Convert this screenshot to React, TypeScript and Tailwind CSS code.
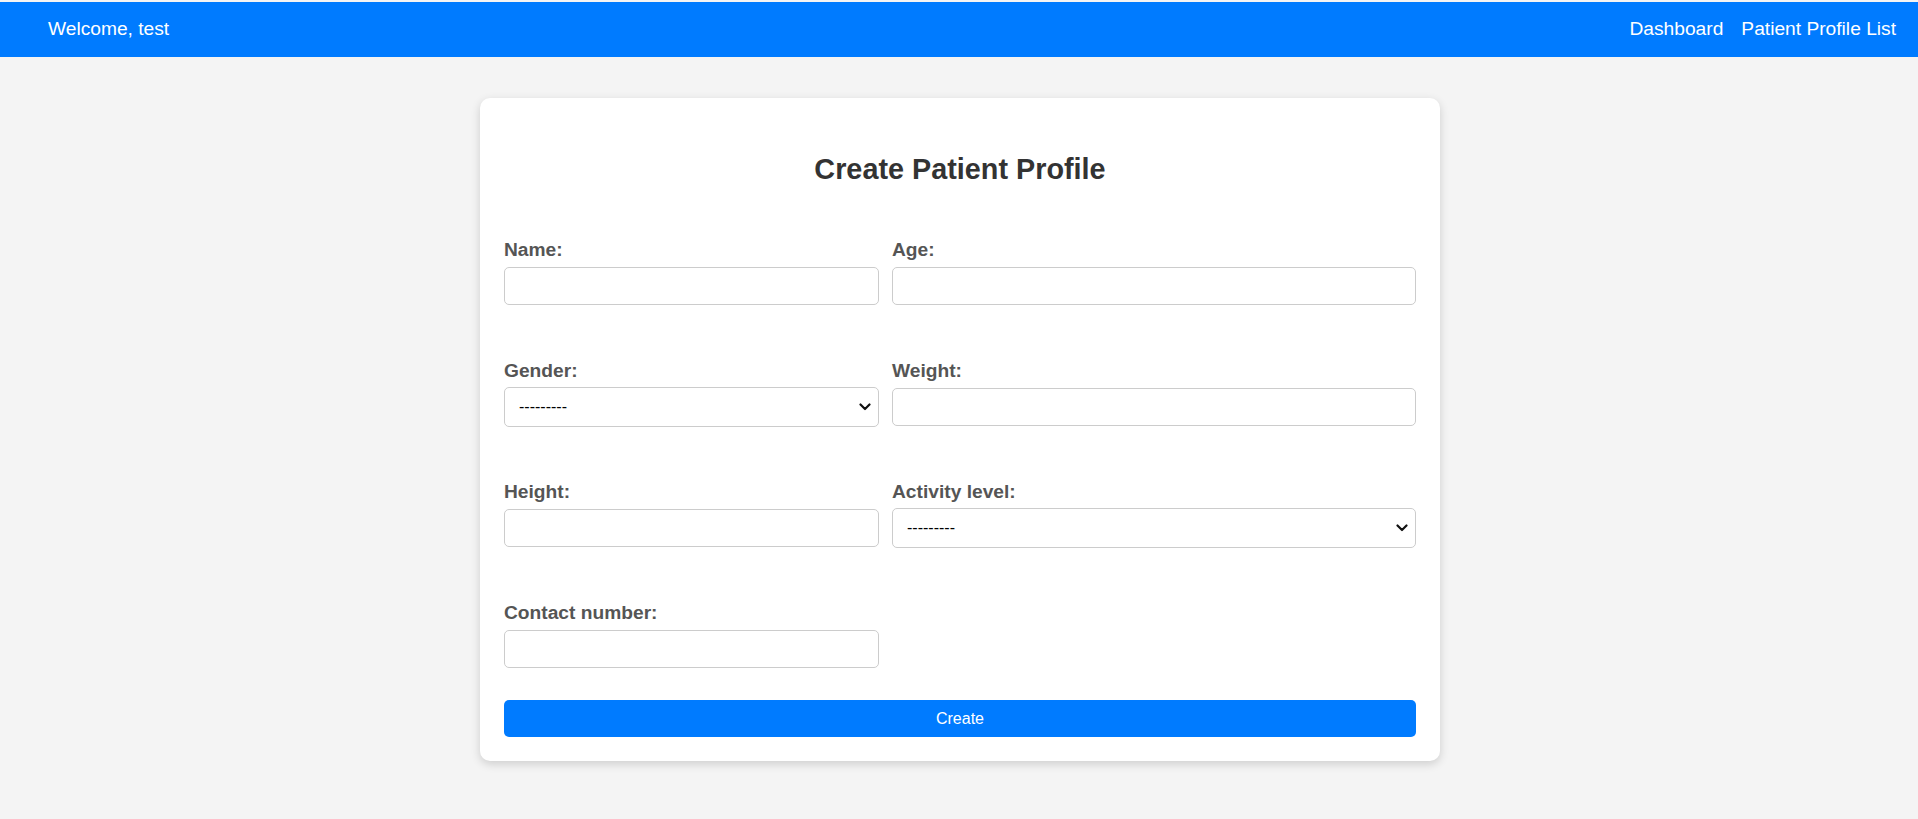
import React from 'react';

const Chevron: React.FC = () => (
  <svg
    className="pointer-events-none absolute right-[8px] top-1/2 -translate-y-1/2"
    width="12"
    height="8"
    viewBox="0 0 12 8"
    fill="none"
  >
    <path d="M1.5 1.5 L6 6 L10.5 1.5" stroke="#111" strokeWidth="2.2" strokeLinecap="round" strokeLinejoin="round" />
  </svg>
);

const TextField: React.FC<{ label: string; id: string }> = ({ label, id }) => (
  <div className="flex h-[67px] flex-col">
    <label htmlFor={id} className="mb-[5px] block text-[19.2px] font-bold leading-[22px] text-[#555]">
      {label}
    </label>
    <input
      id={id}
      type="text"
      className="mt-px h-[38px] w-full rounded-[5px] border border-[#ccc] bg-white px-[10px] text-[16px] outline-none"
    />
  </div>
);

const SelectField: React.FC<{ label: string; id: string; options: string[] }> = ({ label, id, options }) => (
  <div className="flex h-[67px] flex-col">
    <label htmlFor={id} className="mb-[5px] block text-[19.2px] font-bold leading-[22px] text-[#555]">
      {label}
    </label>
    <div className="relative">
      <select
        id={id}
        defaultValue=""
        className="h-[40px] w-full appearance-none rounded-[5px] border border-[#ccc] bg-white pl-[14px] pr-[30px] text-[16px] text-black outline-none"
      >
        <option value="">---------</option>
        {options.map((o) => (
          <option key={o} value={o}>{o}</option>
        ))}
      </select>
      <Chevron />
    </div>
  </div>
);

const App: React.FC = () => {
  return (
    <div className="min-h-screen bg-[#f4f4f4] pt-[2px] font-['Liberation_Sans',Arial,sans-serif]">
      <nav className="flex h-[55px] items-center justify-between bg-[#007bff] pb-[2px] pl-[48px] pr-[22px] text-[19.2px] leading-[22px] text-white">
        <span>Welcome, test</span>
        <div className="flex items-center gap-[18px]">
          <a href="#">Dashboard</a>
          <a href="#">Patient Profile List</a>
        </div>
      </nav>

      <div className="mt-[41px] flex justify-center pl-[2px]">
        <div className="w-[960px] rounded-[10px] bg-white px-[24px] pb-[24px] pt-[24px] shadow-[0_3px_10px_rgba(0,0,0,0.16)]">
          <h2 className="mt-[31px] text-center text-[28.8px] font-bold leading-[32px] text-[#333]">
            Create Patient Profile
          </h2>

          <form className="mt-[54px]" onSubmit={(e) => e.preventDefault()}>
            <div className="grid grid-cols-[375px_1fr] gap-x-[13px] gap-y-[54px]">
              <TextField label="Name:" id="name" />
              <TextField label="Age:" id="age" />
              <SelectField label="Gender:" id="gender" options={['Male', 'Female', 'Other']} />
              <TextField label="Weight:" id="weight" />
              <TextField label="Height:" id="height" />
              <SelectField
                label="Activity level:"
                id="activity"
                options={['Sedentary', 'Lightly active', 'Moderately active', 'Very active']}
              />
              <TextField label="Contact number:" id="contact" />
            </div>

            <button
              type="submit"
              className="mt-[31px] h-[37px] w-full rounded-[5px] bg-[#007bff] text-[16px] text-white"
            >
              Create
            </button>
          </form>
        </div>
      </div>
    </div>
  );
};

export default App;
